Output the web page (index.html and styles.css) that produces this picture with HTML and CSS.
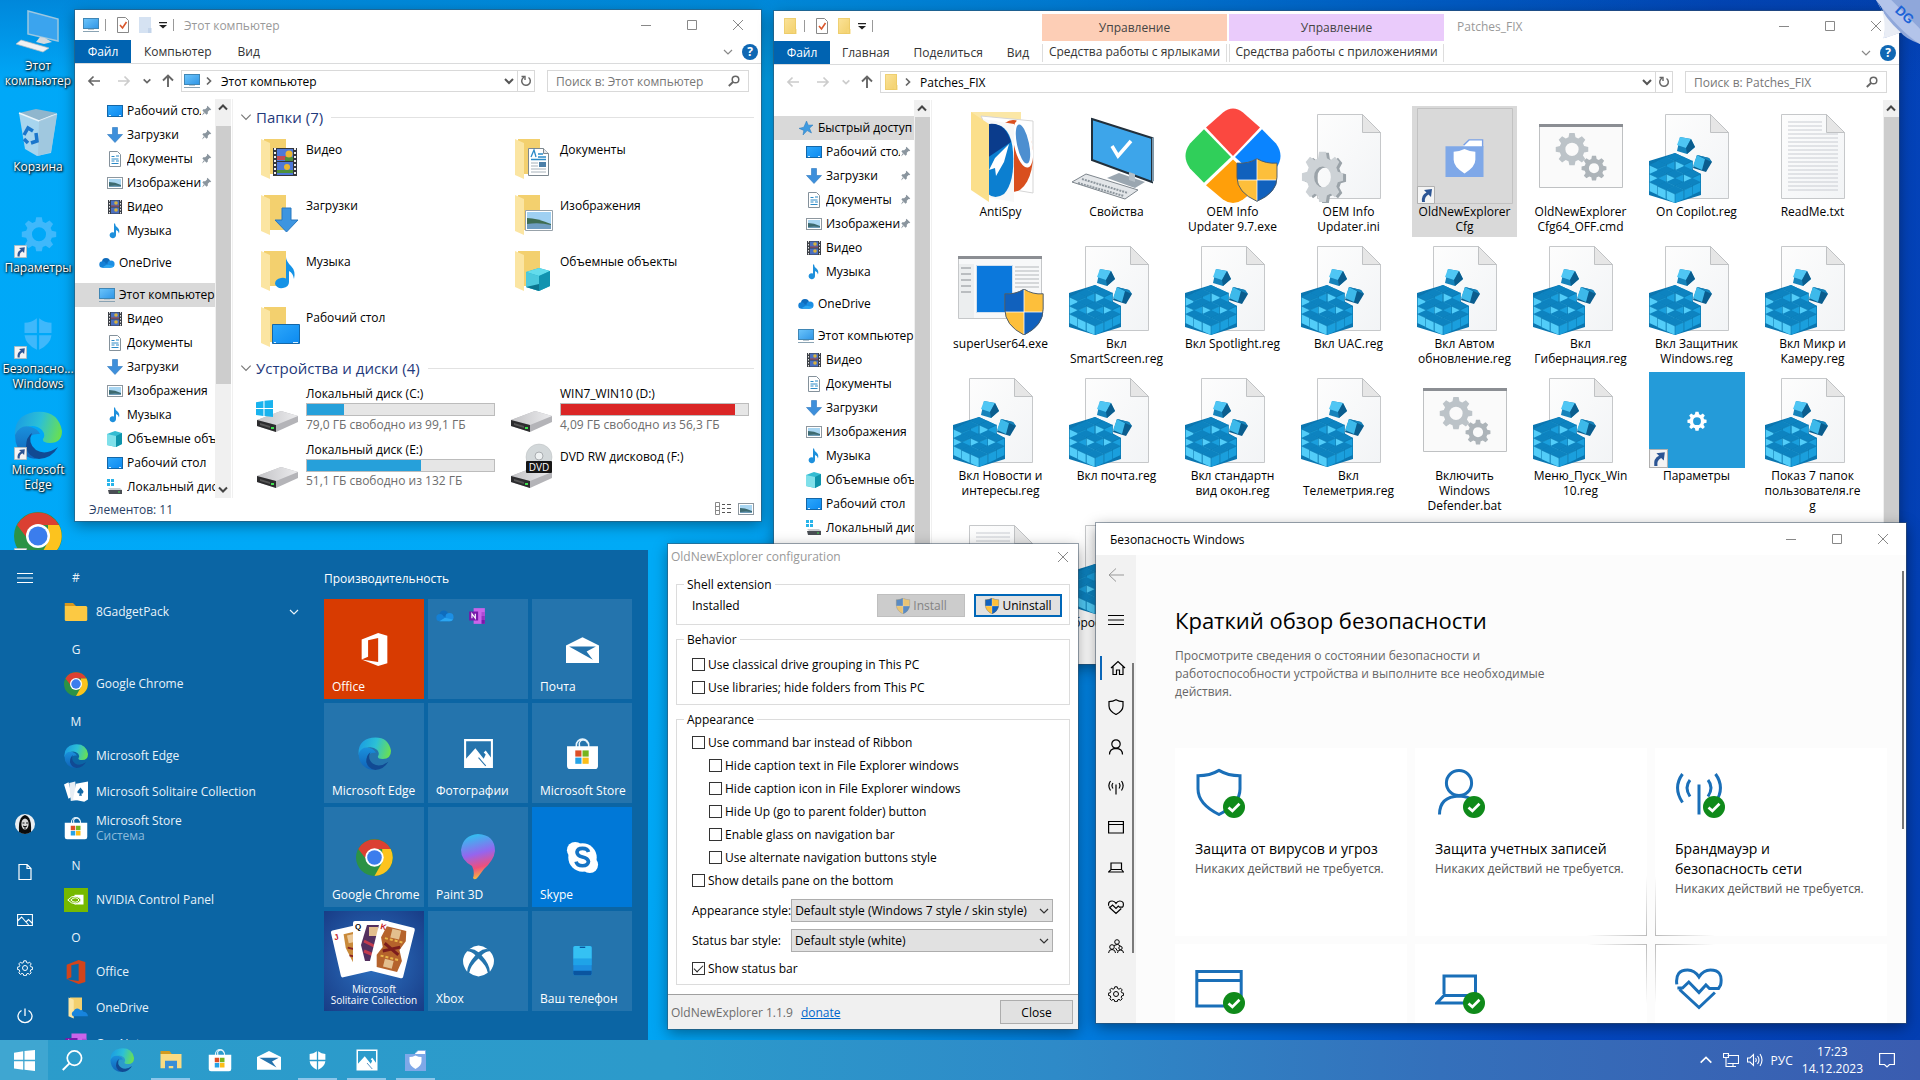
FILE: index.html
```html
<!DOCTYPE html>
<html lang="ru">
<head>
    <meta charset="UTF-8">
    <meta name="viewport" content="width=device-width, initial-scale=1.0">
    <title>Рабочий стол</title>
    <link rel="stylesheet" href="styles.css">
</head>
<body>
    <!-- Icon sprite -->
    <svg class="sprite" aria-hidden="true">
        <defs>
            <linearGradient id="gScreen" x1="0" y1="0" x2="1" y2="1"><stop offset="0" stop-color="#6cc5fb"/><stop offset="1" stop-color="#2f95e6"/></linearGradient>
            <linearGradient id="gDesk" x1="0" y1="0" x2="1" y2="1"><stop offset="0" stop-color="#2ea8fb"/><stop offset="1" stop-color="#0c8af0"/></linearGradient>
            <linearGradient id="gFolder" x1="0" y1="0" x2="1" y2="1"><stop offset="0" stop-color="#fbe39a"/><stop offset="1" stop-color="#f2cf69"/></linearGradient>
            <linearGradient id="gEdgeTop" x1="0" y1="0.4" x2="1" y2="0.6"><stop offset="0" stop-color="#1b9de2"/><stop offset="0.5" stop-color="#2cc0d6"/><stop offset="1" stop-color="#6be04f"/></linearGradient>
            <linearGradient id="gEdgeLow" x1="0" y1="0" x2="0" y2="1"><stop offset="0" stop-color="#1a90dc"/><stop offset="1" stop-color="#1063b8"/></linearGradient>
            <linearGradient id="gPage" x1="0" y1="0" x2="1" y2="1"><stop offset="0" stop-color="#fdfdfd"/><stop offset="1" stop-color="#f2f4f6"/></linearGradient>
            <linearGradient id="gPaint" x1="0.3" y1="0" x2="0.5" y2="1"><stop offset="0" stop-color="#2cc4f0"/><stop offset="0.45" stop-color="#9565ee"/><stop offset="0.75" stop-color="#ef4f7c"/><stop offset="1" stop-color="#f8c23a"/></linearGradient>
            <linearGradient id="gDrive" x1="0" y1="0" x2="1" y2="0"><stop offset="0" stop-color="#c3c3c6"/><stop offset="1" stop-color="#ececee"/></linearGradient>
        </defs>

        <!-- 16px icons -->
        <symbol id="i-pc" viewBox="0 0 16 16"><rect x="0.5" y="1.5" width="15" height="10" fill="url(#gScreen)" stroke="#3f86b5"/><path d="M0 14.5h16" stroke="#8aa3b3"/><path d="M5 12.5h6" stroke="#b9c7d0"/></symbol>
        <symbol id="i-desk" viewBox="0 0 16 16"><rect x="0.5" y="2.5" width="15" height="11" fill="url(#gDesk)" stroke="#1467a8"/><path d="M2 12.5h2M12 12.5h2" stroke="#d8efff"/></symbol>
        <symbol id="i-down" viewBox="0 0 16 16"><path d="M5.5 .5h5v7h5L8 15.5 .5 7.5h5z" fill="#3d8fdb" stroke="#2c77bd" stroke-width="0.6"/></symbol>
        <symbol id="i-doc" viewBox="0 0 16 16"><path d="M2.5 .5h8l3 3v12h-11z" fill="#fff" stroke="#84919b"/><path d="M4.5 5.5h3M4.5 8h7M4.5 10h3M9 10h3M4.5 12.5h7M9 5h3" stroke="#2c8ac7"/></symbol>
        <symbol id="i-pic" viewBox="0 0 16 16"><rect x="0.5" y="2.5" width="15" height="11" fill="#fff" stroke="#8d979f"/><path d="M2 4h12v8H2z" fill="#a9d6f2"/><path d="M2 7q6 0 12 3v2H2z" fill="#3d6a70"/><path d="M2 11q6-1 12 0v1H2z" fill="#6c9bb8"/></symbol>
        <symbol id="i-video" viewBox="0 0 16 16"><path d="M1 1h14v14H1z" fill="#3b3f46"/><path d="M4 1.5h8v6H4z" fill="#4a6fc0"/><path d="M4 8.5h8v6H4z" fill="#4a6fc0"/><circle cx="9" cy="4" r="1.8" fill="#d9b23c"/><circle cx="9" cy="11" r="1.8" fill="#d9b23c"/><path d="M4 6.5h8v1H4z" fill="#a9443c"/><path d="M2.5 1v14M13.5 1v14" stroke="#e6e6e6" stroke-dasharray="1.5 1.5"/></symbol>
        <symbol id="i-music" viewBox="0 0 16 16"><path d="M8 .5q0 2 2.5 4t1.5 6q-.5-3-3-3.500V12a3.200 3 0 1 1-2-2.600V.5z" fill="#1e90dc"/></symbol>
        <symbol id="i-cloud" viewBox="0 0 16 16"><circle cx="7" cy="7" r="4" fill="#0f6cbd"/><circle cx="3.500" cy="9.500" r="3.200" fill="#1480d6"/><circle cx="12" cy="9" r="3.600" fill="#1c8fe4"/><path d="M3.500 12.700 7 8l5 4.700z" fill="#1480d6"/><path d="M3 12.600 8 9.500l7 1.500q-1 1.700-3 1.700z" fill="#2ba6f2"/></symbol>
        <symbol id="i-cube" viewBox="0 0 16 16"><path d="M0 3 8 0l7 2v11l-6 3-9-2z" fill="#33bcd2"/><path d="M0 3l9 2v11l-9-2z" fill="#7fe0ea"/><path d="M9 5l6-3v11l-6 3z" fill="#0e94ab"/></symbol>
        <symbol id="i-disk" viewBox="0 0 16 16"><path d="M1 9h12l2 2H3z" fill="#c9ccd0"/><path d="M1 11h14v4H2z" fill="#4a4e54"/><path d="M11 13h2" stroke="#3fe04f"/><path d="M0 0h3v3H0zM4 0h3v3H4zM0 4h3v3H0zM4 4h3v3H4z" fill="#28b4ea"/></symbol>
        <symbol id="i-star" viewBox="0 0 16 16"><path d="M8.5 1l1.800 4.200 4.700-.2-3.500 3.200 2 4.800-4.300-2.400L5 15l.8-4.600L1 8.400l4.800-1.200z" fill="#3f9ae0" stroke="#2479bd" stroke-width="0.5"/></symbol>
        <symbol id="i-pin" viewBox="0 0 12 12"><path d="M7 .8 11.200 5l-1.200.6-.6-.2-2 2 .1 2L6 10.500 1.500 6l1-1.400 2.100.1 2-2-.2-.7zM3 8l1 1-3 2.500z" fill="#8a959e"/></symbol>
        <symbol id="i-fold" viewBox="0 0 16 16"><path d="M2 0h12v16H2z" fill="url(#gFolder)"/><path d="M11 11h3.500v5H11z" fill="#f5d679"/><path d="M2.500 .5h11v15h-11z" fill="none" stroke="#e8c660" stroke-width="0.6"/></symbol>
        <symbol id="i-foldoff" viewBox="0 0 16 16"><path d="M2 0h12v16H2z" fill="#d5e2f2"/><path d="M11 11h3.500v5H11z" fill="#c3d4ea"/></symbol>
        <symbol id="i-check" viewBox="0 0 16 16"><path d="M2.500 .5h8l3 3v12h-11z" fill="#fff" stroke="#888"/><path d="M5 8l2.500 3L11.500 5" fill="none" stroke="#d9572c" stroke-width="1.6"/></symbol>
        <symbol id="i-qat" viewBox="0 0 8 8"><path d="M0 1h8v1.300H0zM0 4h8L4 7.500z" fill="#222"/></symbol>
        <symbol id="i-left" viewBox="0 0 16 16"><path d="M14 8H3M7.500 3.500 3 8l4.500 4.500" fill="none" stroke="currentColor" stroke-width="1.7"/></symbol>
        <symbol id="i-right" viewBox="0 0 16 16"><path d="M2 8h11M8.500 3.500 13 8l-4.500 4.500" fill="none" stroke="currentColor" stroke-width="1.7"/></symbol>
        <symbol id="i-up" viewBox="0 0 16 16"><path d="M8 14V3M3 7.500 8 2.500l5 5" fill="none" stroke="currentColor" stroke-width="1.9"/></symbol>
        <symbol id="i-chev" viewBox="0 0 12 12"><path d="M2 4l4 4 4-4" fill="none" stroke="currentColor" stroke-width="var(--w, 1.2)"/></symbol>
        <symbol id="i-chevr" viewBox="0 0 12 12"><path d="M4 2.500 7.500 6 4 9.500" fill="none" stroke="#666" stroke-width="1.7"/></symbol>
        <symbol id="i-reload" viewBox="0 0 12 12"><path d="M4 2.200A4.300 4.300 0 1 0 8.500 2.500" fill="none" stroke="#666" stroke-width="1.5"/><path d="M1.500 1.500H5V5" fill="none" stroke="#666" stroke-width="1.4"/></symbol>
        <symbol id="i-find" viewBox="0 0 12 12"><circle cx="7.500" cy="4.500" r="3.300" fill="none" stroke="#666" stroke-width="1.5"/><path d="M5 7 .8 11" stroke="#666" stroke-width="1.9"/></symbol>
        <symbol id="i-min" viewBox="0 0 10 10"><path d="M0 5.500h10" stroke="currentColor"/></symbol>
        <symbol id="i-max" viewBox="0 0 10 10"><path d="M.5 .5h9v9h-9z" fill="none" stroke="currentColor"/></symbol>
        <symbol id="i-close" viewBox="0 0 10 10"><path d="M0 0l10 10M10 0 0 10" stroke="currentColor"/></symbol>

        <!-- explorer tiles -->
        <symbol id="t-folder" viewBox="0 0 44 48"><path d="M8 3h22v35H8z" fill="#f3d06e"/><path d="M5 3l9 4v36l-9-4z" fill="#fbe5a2"/></symbol>
        <symbol id="t-video" viewBox="0 0 44 48"><use href="#t-folder"/><path d="M17 12h24v28H17z" fill="#33363c"/><path d="M21 13h16v12H21zM21 26h16v13H21z" fill="#4e78d8"/><path d="M21 20h9v4h-9z" fill="#c24c54"/><path d="M29 21h8v4h-8zM21 34h16v3H21z" fill="#4f8f3c"/><circle cx="33" cy="18" r="3.5" fill="#ecb731"/><circle cx="31" cy="31" r="3" fill="#ecb731"/><path d="M19 12v28M39 12v28" stroke="#f0f0f0" stroke-width="2" stroke-dasharray="2 2"/></symbol>
        <symbol id="t-down" viewBox="0 0 44 48"><use href="#t-folder"/><path d="M26 16h9v12h7L30.500 40 19 28h7z" fill="#3d95e0" stroke="#2878c0"/></symbol>
        <symbol id="t-music" viewBox="0 0 44 48"><use href="#t-folder"/><path d="M30 9q0 4 5 9t3 13q-1-6-5-8v11q0 5-6 6t-8-4q0-5 6-6 3-.5 5 .5z" fill="#1492e6"/></symbol>
        <symbol id="t-desk" viewBox="0 0 44 48"><use href="#t-folder"/><path d="M16.500 20.500h27v19h-27z" fill="url(#gDesk)" stroke="#1467a8"/><path d="M18 38.500h2M37 38.500h5" stroke="#d8efff"/></symbol>
        <symbol id="t-doc" viewBox="0 0 44 48"><use href="#t-folder"/><path d="M18.500 12.500h15l5 5v22h-20z" fill="#fff" stroke="#7d8890"/><path d="M33.500 12.500v5h5" fill="#e4e8ec" stroke="#7d8890"/><path d="M21 21 24 14l2 7M28 18h5M28 21h8M21 23.500h15" fill="none" stroke="#2c8ac7" stroke-width="1.3"/><path d="M21 27h7M21 30h7M21 33h15M21 36h15" stroke="#a7b2ba"/><path d="M29 26h7v5h-7z" fill="#4b7fa8"/></symbol>
        <symbol id="t-pic" viewBox="0 0 44 48"><use href="#t-folder"/><path d="M15.500 18.500h27v20h-27z" fill="#fff" stroke="#98a2aa"/><path d="M17 20h24v17H17z" fill="#9fd0f2"/><path d="M17 26q10 0 24 6v2H17z" fill="#3f6d52"/><path d="M17 32q12-2 24 1v4H17z" fill="#6f9dc0"/></symbol>
        <symbol id="t-cube" viewBox="0 0 44 48"><use href="#t-folder"/><path d="M16 24l13-4 11 3v15l-11 5-13-4z" fill="#21b0cc"/><path d="M16 24l13-4 11 3-11 5z" fill="#63dcec"/><path d="M16 24l13 4v15l-13-4z" fill="#4bc9de"/><path d="M29 28l11-5v15l-11 5z" fill="#1193b0"/><path d="M29 36l-13 3 13 4z" fill="#0a7590"/></symbol>
        <symbol id="t-drive" viewBox="0 0 44 50"><path d="M1 38 25 29l17 5v6L20 50 1 44z" fill="#b4b4b8"/><path d="M1 38 25 29l17 5-22 9z" fill="url(#gDrive)"/><path d="M1 38l19 5v7L1 44z" fill="#2c2c2e"/><path d="M4 41l10 3v2L4 43z" fill="#555"/><path d="M15 45h3v2h-3z" fill="#3fe04f"/></symbol>
        <symbol id="t-winflag" viewBox="0 0 16 16"><path d="M0 2l7-1v6.500H0zM8 .8 16 0v7.500H8zM0 8.500h7V15l-7-1zM8 8.500h8V16l-8-1z" fill="currentColor"/></symbol>
        <symbol id="t-sysdrive" viewBox="0 0 44 50"><use href="#t-drive"/><use href="#t-winflag" x="0" y="18" width="17" height="17" color="#19b3ee"/></symbol>
        <symbol id="t-dvd" viewBox="0 0 44 50"><use href="#t-drive"/><circle cx="29" cy="19" r="13" fill="#d3d8da" stroke="#b8bcbe" stroke-width="0.5"/><circle cx="29" cy="18" r="4" fill="#eef1f2" stroke="#a9adb0"/><rect x="16" y="23" width="26" height="12" rx="1" fill="#161616"/><text x="29" y="33" class="dvd-label">DVD</text></symbol>

        <!-- 96px file icons -->
        <symbol id="f-page" viewBox="0 0 96 96"><path d="M16.500 6.500h45l18 18v66h-63z" fill="url(#gPage)" stroke="#c6c8ca"/><path d="M61.500 6.500v18h18z" fill="#e6e6e6" stroke="#c0c2c4"/></symbol>
        <symbol id="f-cell" viewBox="0 0 18 18"><path d="M9 0l8.700 4L9 8 .3 4z" fill="#0d83c0"/><path d="M.3 4 9 8v9L.3 13z" fill="#52cdf9"/><path d="M17.700 4 9 8v9l8.700-4z" fill="#1a9fdd"/><path d="M.3 13V4L9 8l8.700-4v9M9 8v9" fill="none" stroke="#0c74ab" stroke-width="0.6"/></symbol>
        <symbol id="f-reg" viewBox="0 0 96 96">
            <use href="#f-page"/>
            <path d="M31 29l11 2 4 8-8 7-10-3z" fill="#1583bb"/><path d="M31 29l11 2-5 9-9-3z" fill="#4fc6f4"/><path d="M37 40l5-9 4 8-8 7z" fill="#0a5d8e"/>
            <path d="M48 47l12 3 3 4-6 10-13-4z" fill="#0a5d8e"/><path d="M48 47l8 4-3 11-9-4z" fill="#3db9ea"/><path d="M48 47l12 3 3 4-7-3z" fill="#1583bb"/>
            <path d="M26 45l17 8v8l9 5v21l-26 8-26-8V53z" fill="#0b76b0"/>
            <use href="#f-cell" x="17" y="45" width="18" height="18"/><use href="#f-cell" x="26" y="49" width="18" height="18"/>
            <use href="#f-cell" x="8" y="49" width="18" height="18"/><use href="#f-cell" x="0" y="53" width="18" height="18"/>
            <use href="#f-cell" x="26" y="58" width="18" height="18"/><use href="#f-cell" x="34" y="62" width="18" height="18"/>
            <use href="#f-cell" x="8" y="58" width="18" height="18"/><use href="#f-cell" x="0" y="62" width="18" height="18"/>
            <use href="#f-cell" x="17" y="62" width="18" height="18"/><use href="#f-cell" x="34" y="70" width="18" height="18"/>
            <use href="#f-cell" x="0" y="70" width="18" height="18"/><use href="#f-cell" x="17" y="70" width="18" height="18"/>
            <use href="#f-cell" x="26" y="74" width="18" height="18"/><use href="#f-cell" x="8" y="74" width="18" height="18"/>
            <use href="#f-cell" x="17" y="78" width="18" height="18"/>
        </symbol>
        <symbol id="f-txt" viewBox="0 0 96 96"><use href="#f-page"/><path d="M23 14h34M23 18h34M23 22h34M23 26h50M23 30h50M23 34h50M23 38h50M23 42h50M23 46h50M23 50h50M23 54h50M23 58h50M23 62h50M23 66h50M23 70h50M23 74h50M23 78h50M23 82h50" stroke="#c9ccd2"/></symbol>
        <symbol id="f-gear" viewBox="0 0 32 32" preserveAspectRatio="none"><path d="M13.500 1h5l.8 4 2.600 1.200L25.300 4 28.500 7.200l-2.200 3.400 1.100 2.600 3.900.8v4.600l-3.900.8-1.100 2.600 2.200 3.400-3.200 3.200-3.400-2.200-2.600 1.100-.8 3.900h-5l-.8-3.900-2.600-1.100-3.400 2.200-3.200-3.200L5.700 22l-1.100-2.600-3.900-.8V14l3.900-.8 1.100-2.600-2.200-3.400L6.700 4l3.400 2.200L12.700 5zM16 10a6 6 0 1 0 0 12.500A6 6 0 0 0 16 10z" fill="currentColor" fill-rule="evenodd"/></symbol>
        <symbol id="f-cmd" viewBox="0 0 96 96"><path d="M6.500 17.500h83v62h-83z" fill="#fafafa" stroke="#bfc1c3"/><path d="M6 16h84v3H6z" fill="#8b8e93"/><use href="#f-gear" x="22" y="24" width="34" height="34" color="#bcc3c8"/><use href="#f-gear" x="48" y="47" width="26" height="26" color="#adb4b9"/></symbol>
        <symbol id="f-ini" viewBox="0 0 96 96"><use href="#f-page"/><use href="#f-gear" x="3" y="43" width="43" height="53" color="#9ba3a9"/><use href="#f-gear" x="0" y="42" width="43" height="53" color="#cdd2d6"/></symbol>
        <symbol id="f-shield" viewBox="0 0 42 48"><path d="M21 0q9 6 20 5v16q0 17-20 27Q1 38 1 21V5q11 1 20-5z" fill="#fdbf3b"/><path d="M21 0v24H1V5q11 1 20-5zM21 24h20q-1 15-20 24z" fill="#1161bd"/><path d="M21 0v48M1 24h40" stroke="#fff" stroke-width="0.8"/><path d="M21 0q9 6 20 5v16q0 17-20 27Q1 38 1 21V5q11 1 20-5z" fill="none" stroke="#4a5a6a"/></symbol>
        <symbol id="f-oem" viewBox="0 0 96 108" preserveAspectRatio="none"><path d="M21 22 38 5q10-9 20 0l17 17-27 32z" fill="#fb4840"/><path d="M77 24l14 16q9 14 0 28L78 84 50 55z" fill="#0a84ff"/><path d="M19 24 5 40q-9 14 0 28l14 16 27-29z" fill="#30cf5a"/><path d="M48 58 76 87 58 103q-10 8-20 0L21 87z" fill="#ff9f0a"/><use href="#f-shield" x="51" y="56" width="42" height="50"/></symbol>
        <symbol id="f-antispy" viewBox="0 0 96 96"><path d="M18 4h50v70H18z" fill="#fbe7a6"/><path d="M28 8l52 5v72l-18-3z" fill="#fff" stroke="#d5d5d5"/><ellipse cx="60" cy="48" rx="20" ry="36" fill="#d94f1e"/><ellipse cx="70" cy="36" rx="9" ry="24" fill="#fff" transform="rotate(-12 70 36)"/><ellipse cx="70" cy="36" rx="6" ry="20" fill="#4d8fd0" transform="rotate(-12 70 36)"/><path d="M30 11l31 5v78l-28-5z" fill="#f8f8f8"/><path d="M36 16q22-2 24 28t-9 42q-9 6-16 0z" fill="#0c7fd0"/><path d="M36 16q16-2 22 18L34 50z" fill="#0b3c8c"/><path d="M56 36 42 50l-6 12 6-2 1 8 8-14z" fill="#fff"/><path d="M18 4l18 12v78L18 82z" fill="#fbdf8b"/></symbol>
        <symbol id="f-props" viewBox="0 0 96 96"><path d="M23 11l60 19v44L23 52z" fill="#3da5ea" stroke="#22303c" stroke-width="2"/><path d="M83 30l2-1v44l-2 1z" fill="#7f98aa"/><path d="M38 70l12-5 26 9-10 6z" fill="#9aa6b0"/><path d="M60 64l6 2v8l-6-2z" fill="#b4bec6"/><path d="M3 74l14-8 52 16-13 9z" fill="#e3e6e9" stroke="#7e868d"/><path d="M9 75l46 13M13 71l46 14" stroke="#8e979e" stroke-width="2" stroke-dasharray="2 1"/><path d="M43 38l6 10 13-15" fill="none" stroke="#fff" stroke-width="3.5"/></symbol>
        <symbol id="f-super" viewBox="0 0 96 96"><path d="M5.500 16.500h83v62h-83z" fill="#f7f8f9" stroke="#c5c7c9"/><path d="M5 16h84v3H5z" fill="#8b8e93"/><path d="M6 24h15v54H6z" fill="#eceeef"/><path d="M8 28h10M8 34h10M8 40h10M8 46h10M8 52h10" stroke="#a9adb1" stroke-width="1.5"/><path d="M23.500 25.500h36v47h-36z" fill="#0b78dc" stroke="#cfe0f0"/><path d="M62 27h24M62 31h24M62 35h24M62 39h24M62 43h24M62 47h24" stroke="#b3b7ba"/><use href="#f-shield" x="50" y="49" width="42" height="46"/></symbol>
        <symbol id="f-link" viewBox="0 0 18 18"><path d="M.5 .5h17v17H.5z" fill="#f4f4f4" stroke="#b0b0b0"/><path d="M5 16q-1-7 4.500-9.500L7 4l8-1-1 8-2.500-2.500Q7 11 8 16z" fill="#2c5594"/></symbol>
        <symbol id="f-shieldfolder" viewBox="0 0 42 42"><path d="M20 7l6-6h15v8H20z" fill="#fff"/><path d="M20 7l6-6h15v8" fill="none" stroke="#7aa1e6" stroke-width="1.5"/><path d="M0 8h42v34H0z" fill="#7fa8e8"/><path d="M21 11q6 3 12 3v9q0 8-12 15Q9 31 9 23v-9q6 0 12-3z" fill="#fff"/></symbol>
        <symbol id="f-cfg" viewBox="0 0 96 96"><path d="M.5 .5h95v95H.5z" fill="none" stroke="#c2c2c2"/><use href="#f-shieldfolder" x="27" y="31" width="41" height="38"/><use href="#f-link" x="0" y="78" width="18" height="18"/></symbol>
        <symbol id="f-param" viewBox="0 0 96 96"><path d="M0 0h96v96H0z" fill="#249bd9"/><use href="#f-gear" x="38" y="39" width="20" height="20" color="#fff"/><use href="#f-link" x="0" y="77" width="19" height="19"/></symbol>

        <!-- apps -->
        <symbol id="a-edge" viewBox="0 0 48 48"><path d="M1 26Q-1 5 20 1q24-3 28 19 0 12-12 12-8 0-7-4 3-4-1-9-8-7-17-2Q3 20 1 26z" fill="url(#gEdgeTop)"/><path d="M1 24q5-11 16-8 7 2 9 7-11-1-13 8-1 12 12 16-7 2-13-2Q1 39 1 24z" fill="url(#gEdgeLow)"/><path d="M18 22q-5 10 4 17 10 6 22-3-6 11-19 12-11-2-13-12 0-10 6-14z" fill="#114a93"/></symbol>
        <symbol id="a-chrome" viewBox="0 0 48 48"><circle cx="24" cy="24" r="24" fill="#2b9246"/><path d="M3 13A24 24 0 0 1 45 13H24L13 26z" fill="#db4032"/><path d="M45 13a24 24 0 0 1-21 35l10-18V13z" fill="#fcc31e"/><circle cx="24" cy="24" r="12" fill="#fff"/><circle cx="24" cy="24" r="9.5" fill="#3b7ded"/></symbol>
        <symbol id="a-store" viewBox="0 0 32 32"><path d="M10 12V8a6 6 0 0 1 12 0v4M13 12V8a4 4 0 0 1 8-2" fill="none" stroke="#e8f4fb" stroke-width="1.5"/><path d="M1 9h30v19q0 3-3 3H4q-3 0-3-3z" fill="#fff"/><path d="M9 13h6v6H9z" fill="#dd4f26"/><path d="M16 13h6v6h-6z" fill="#78b41e"/><path d="M9 20h6v6H9z" fill="#26a3e6"/><path d="M16 20h6v6h-6z" fill="#fbbd18"/></symbol>
        <symbol id="a-mail" viewBox="0 0 32 32"><path d="M0 12 16 4l16 8v17H0z" fill="#fff"/><path d="M3 13h26l-9 5 6 8L3 13z" fill="#2473ad"/></symbol>
        <symbol id="a-photo" viewBox="0 0 32 32"><path d="M3 3h26v26H3z" fill="none" stroke="#fff" stroke-width="2"/><path d="M3 22l10-11 8 10 2-4-2-2 2-2 6 8v8H3z" fill="#fff"/><path d="M16 20l7 8" stroke="#2473ad"/></symbol>
        <symbol id="a-office" viewBox="0 0 32 36"><path d="M2 7 20 0l10 3v30l-10 3L2 29l18 2.500V5.500L9 8v18l-7 3z" fill="currentColor"/></symbol>
        <symbol id="a-phone" viewBox="0 0 32 36"><rect x="6" y="1" width="20" height="32" rx="1.5" fill="#1c8ee0"/><path d="M6 3q0-2 2-2h16q2 0 2 2v12H6z" fill="#35c1f3"/><path d="M6 15h20v7H6z" fill="#1fa3e8"/><path d="M6 28h20v3q0 2-2 2H8q-2 0-2-2z" fill="#0a55a0"/><path d="M13 2.500h6" stroke="#0a55a0" stroke-width="1.5"/></symbol>
        <symbol id="a-skype" viewBox="0 0 36 36"><circle cx="10" cy="10" r="9" fill="#fff"/><circle cx="26" cy="26" r="9" fill="#fff"/><circle cx="18" cy="18" r="15.5" fill="#fff"/><path d="M24.500 12q-1-4-6.500-4t-6 4q0 4 6 5.500t6.500 5q-.5 4.500-6.500 4.500t-7-4.500" fill="none" stroke="#1473c4" stroke-width="4"/></symbol>
        <symbol id="a-paint" viewBox="0 0 36 46"><path d="M18 0q17 1 17 17-1 9-11 18l-6 8q-3 4-5 1 2-6-1-12Q1 26 1 16 3 1 18 0z" fill="url(#gPaint)"/></symbol>
        <symbol id="a-xbox" viewBox="0 0 32 32"><path d="M7 4q9-7 18 0-4-1-9 3-5-4-9-3zM5 6q4 0 8 4-8 9-8 16-8-11 0-20zM27 6q-4 0-8 4 8 9 8 16 8-11 0-20zM16 13q8 7 9 14-9 7-18 0 1-7 9-14z" fill="#fff"/></symbol>
        <symbol id="a-note" viewBox="0 0 32 32"><path d="M10 2h20v28H10z" fill="#ca64ea"/><path d="M24 9h6v7h-6z" fill="#ae4bd5"/><path d="M24 16h6v7h-6z" fill="#9332bf"/><path d="M24 23h6v7h-6z" fill="#7719aa"/><path d="M2 8h16v16H2z" fill="#7719aa"/><path d="M7 20v-8l6 8v-8" fill="none" stroke="#fff" stroke-width="2"/></symbol>
        <symbol id="a-folder" viewBox="0 0 32 32"><path d="M1 4h11l4 4H1z" fill="#d7981d"/><path d="M1 8h28q2 0 2 2v16q0 2-2 2H3q-2 0-2-2z" fill="#fcc943"/></symbol>
        <symbol id="a-explorer" viewBox="0 0 32 32"><path d="M2 4h12l3 4H2z" fill="#d39a1f"/><path d="M2 8h28v19H2z" fill="#fbdb82"/><path d="M8 17h16v12h-5v-5h-6v5H8z" fill="#3b8ed6"/></symbol>
        <symbol id="a-odfolder" viewBox="0 0 32 32"><path d="M8 2h16v20H8z" fill="#f3d06e"/><path d="M6 2l7 3v25l-7-3z" fill="#fbe5a2"/><path d="M12 27a4 4 0 0 1 1-7 5 5 0 0 1 9-1q3-1 4 2 5 0 6 6z" fill="#1784dd"/></symbol>
        <symbol id="a-cards" viewBox="0 0 32 32"><path d="M0 6l6-3 5 19-5 3z" fill="#fff"/><path d="M7 4l8-2 2 25-8 1z" fill="#e8eef4"/><path d="M16 5l16-3v24l-5 3-15-3z" fill="#fff"/><path d="M22 10l4 5q0 4-3 3l1 3h-4l1-3q-4 0-3-3z" fill="#1167a5"/></symbol>
        <symbol id="a-nvidia" viewBox="0 0 32 32"><path d="M0 0h32v32H0z" fill="#76b900"/><path d="M14 9h12v13H14z" fill="#fff"/><path d="M5 16q5-6 11-5 5 1 7 5-3 5-8 5T5 16zM9 16q3-3 6-3t5 3q-2 3-5 3t-6-3z" fill="#76b900" stroke="#fff" stroke-width="1.3"/></symbol>
        <symbol id="a-wshield" viewBox="0 0 32 32"><path d="M15 2v13H4V6q6 0 11-4zM17 2q5 4 11 4v9H17zM4 17h11v13Q5 25 4 17zM17 17h11q-1 8-11 13z" fill="currentColor"/></symbol>
        <symbol id="a-pc" viewBox="0 0 48 48"><path d="M14 4l30 8v22L14 27z" fill="#3ba4ee" stroke="#9cc7e0" stroke-width="1.5"/><path d="M26 30l5 1 7 4-8 2-8-2z" fill="#d3dade"/><path d="M2 37l5-4 28 8-6 4z" fill="#eff1f2" stroke="#b4bcc2" stroke-width="0.7"/></symbol>
        <symbol id="a-bin" viewBox="0 0 48 48"><path d="M5 5l38 2-6 38-14 3-12-7z" fill="#b9d9ec" opacity="0.9"/><path d="M5 5 22 1l21 4-18 8z" fill="#8fb6cd"/><path d="M5 5l20 8 18-7" fill="none" stroke="#eaf5fb" stroke-width="1.5"/><path d="M25 13l18-7-6 38-13 4z" fill="#9fc4db" opacity="0.8"/><path d="M10 27l4-7 5 3M22 25l1 8-6 2M14 35l-4-4" fill="none" stroke="#1a76cc" stroke-width="3.5"/></symbol>

        <!-- outline icons -->
        <symbol id="o-menu" viewBox="0 0 16 16"><path d="M0 3.500h16M0 8h16M0 12.500h16" stroke="currentColor" stroke-width="1.2"/></symbol>
        <symbol id="o-back" viewBox="0 0 16 16"><path d="M16 8H1M8 1.500 1 8l7 6.500" fill="none" stroke="currentColor"/></symbol>
        <symbol id="o-page" viewBox="0 0 16 16"><path d="M2 .5h8l4 4v11H2zM10 .5v4h4" fill="none" stroke="currentColor" stroke-width="1.2"/></symbol>
        <symbol id="o-image" viewBox="0 0 16 16"><path d="M.6 2.500h14.800v11H.6zM.6 9l4-4 7 8M9 10l2.500-2.500 4 4" fill="none" stroke="currentColor" stroke-width="1.1"/></symbol>
        <symbol id="o-gear" viewBox="0 0 16 16"><circle cx="8" cy="8" r="2.5" fill="none" stroke="currentColor"/><path d="M6.800 .8h2.400l.4 1.800 1.400.6 1.600-1 1.600 1.700-1 1.500.6 1.400 1.800.4v2.200l-1.800.4-.6 1.400 1 1.600-1.600 1.600-1.600-1-1.400.6-.4 1.700H6.800l-.4-1.700-1.400-.6-1.600 1-1.600-1.600 1-1.600-.6-1.400-1.800-.4V7.200L2.200 6.800l.6-1.400-1-1.500 1.600-1.700 1.600 1 1.400-.6z" fill="none" stroke="currentColor"/></symbol>
        <symbol id="o-power" viewBox="0 0 16 16"><path d="M8 .5V8M4.500 2.500a7 6.500 0 1 0 7 0" fill="none" stroke="currentColor" stroke-width="1.3"/></symbol>
        <symbol id="o-home" viewBox="0 0 16 16"><path d="M1 8l7-6.500L15 8M3 6.500v8h3.500V10h3v4.500H13v-8" fill="none" stroke="currentColor" stroke-width="1.2"/></symbol>
        <symbol id="o-shield" viewBox="0 0 16 16"><path d="M8 .8q3 1.800 7 1.800V7q0 5-7 8.500Q1 12 1 7V2.600q4 0 7-1.800z" fill="none" stroke="currentColor" stroke-width="var(--w, 1.2)"/></symbol>
        <symbol id="o-user" viewBox="0 0 16 16"><circle cx="8" cy="5" r="4.2" fill="none" stroke="currentColor" stroke-width="var(--w, 1.2)"/><path d="M1.500 15.500q0-6 6.500-6.200 6.500.2 6.500 6.200" fill="none" stroke="currentColor" stroke-width="var(--w, 1.2)"/></symbol>
        <symbol id="o-radio" viewBox="0 0 16 16"><path d="M8 5.500v10M5 4Q3 6.500 5 9.500M11 4q2 2.500 0 5.500M2.500 2Q-.8 6.500 2.500 11.500M13.500 2q3.300 4.500 0 9.500" fill="none" stroke="currentColor" stroke-width="var(--w, 1.2)"/></symbol>
        <symbol id="o-window" viewBox="0 0 16 16"><path d="M.6 2.500h14.800v11.500H.6zM.6 5.500h14.800" fill="none" stroke="currentColor" stroke-width="var(--w, 1.2)"/></symbol>
        <symbol id="o-laptop" viewBox="0 0 16 16"><path d="M3 10V4h10.500v6M3 10.500h10.500L15.500 13H.6zM.6 13h15" fill="none" stroke="currentColor" stroke-width="var(--w, 1.2)"/></symbol>
        <symbol id="o-heart" viewBox="0 0 16 16"><path d="M.6 6.800Q0 2 4.200 2 6.500 2 8 4.300 9.500 2 11.800 2q4.400 0 3.400 5l-.7 1.200H11.500L10.300 7 8 9.500 4.600 6 2.500 8H.8M1.500 8.500 8 14.500l5.300-5" fill="none" stroke="currentColor" stroke-width="var(--w, 1.2)"/></symbol>
        <symbol id="o-family" viewBox="0 0 16 16"><circle cx="9" cy="3" r="2.3" fill="none" stroke="currentColor"/><circle cx="4" cy="8" r="2.3" fill="none" stroke="currentColor"/><circle cx="12.500" cy="9" r="1.7" fill="none" stroke="currentColor"/><path d="M.6 14q0-3.500 3.400-3.500T7.500 14M9.500 14q0-3 3-3t3 3M6 6.500q4-2.500 6.500 .5M7.500 9l2 3" fill="none" stroke="currentColor"/></symbol>
        <symbol id="o-ok" viewBox="0 0 20 20"><circle cx="10" cy="10" r="10" fill="#0f8a1a"/><path d="M5 10.500 8.500 13.500 15 7" fill="none" stroke="#fff" stroke-width="2.5"/></symbol>
        <symbol id="o-net" viewBox="0 0 16 16"><path d="M4.500 3.500h11v8H4.500M10 11.500V14M7 14.500h6M.5 1.500h5v4h-5zM3 5.500v9h4" fill="none" stroke="currentColor" stroke-width="1.1"/></symbol>
        <symbol id="o-sound" viewBox="0 0 16 16"><path d="M.5 6h2.500l3.500-3.500v11L3 10H.5zM8.500 6q1.500 2 0 4M10.500 4q3 4 0 8M13 2q4 6 0 12" fill="none" stroke="currentColor" stroke-width="1.1"/></symbol>
        <symbol id="o-note" viewBox="0 0 16 16"><path d="M.6 1.500h14.800v11H10.500L8 15l-2.500-2.500H.6z" fill="none" stroke="currentColor" stroke-width="1.2"/></symbol>
        <symbol id="o-search" viewBox="0 0 22 22"><circle cx="13" cy="8.500" r="7.5" fill="none" stroke="#fff" stroke-width="1.8"/><path d="M7.800 14 .8 21" stroke="#fff" stroke-width="2"/></symbol>
    </svg>

    <main class="desktop">
        <!-- Desktop shortcuts -->
        <ul class="shortcuts">
            <li><svg class="big"><use href="#a-pc"/></svg><span>Этот<br>компьютер</span></li>
            <li><svg class="big"><use href="#a-bin"/></svg><span>Корзина</span></li>
            <li><svg class="big faint"><use href="#f-gear" x="7" y="7" width="36" height="36"/></svg><svg class="link"><use href="#f-link"/></svg><span>Параметры</span></li>
            <li><svg class="big faint"><use href="#a-wshield" x="6" y="6" width="36" height="36"/></svg><svg class="link"><use href="#f-link"/></svg><span>Безопасно...<br>Windows</span></li>
            <li><svg class="big"><use href="#a-edge"/></svg><svg class="link"><use href="#f-link"/></svg><span>Microsoft<br>Edge</span></li>
            <li><svg class="big"><use href="#a-chrome"/></svg><svg class="link"><use href="#f-link"/></svg></li>
        </ul>

        <!-- This PC window -->
        <section class="window win-pc">
            <header class="titlebar">
                <div class="quick">
                    <svg><use href="#i-pc"/></svg><i></i><svg><use href="#i-check"/></svg><svg><use href="#i-foldoff"/></svg><svg class="tiny"><use href="#i-qat"/></svg><i></i>
                </div>
                <h1>Этот компьютер</h1>
                <div class="caption">
                    <button aria-label="Свернуть"><svg><use href="#i-min"/></svg></button>
                    <button aria-label="Развернуть"><svg><use href="#i-max"/></svg></button>
                    <button aria-label="Закрыть"><svg><use href="#i-close"/></svg></button>
                </div>
            </header>
            <nav class="ribbon">
                <div class="tabs">
                    <a href="#" class="file">Файл</a>
                    <a href="#">Компьютер</a>
                    <a href="#">Вид</a>
                </div>
                <svg class="expand"><use href="#i-chev"/></svg>
                <button class="help" aria-label="Справка">?</button>
            </nav>
            <div class="addressbar">
                <button class="arrow" aria-label="Назад"><svg><use href="#i-left"/></svg></button>
                <button class="arrow off" aria-label="Вперед"><svg><use href="#i-right"/></svg></button>
                <button class="arrow recent" aria-label="Последние"><svg><use href="#i-chev"/></svg></button>
                <button class="arrow parent" aria-label="Вверх"><svg><use href="#i-up"/></svg></button>
                <div class="path">
                    <svg><use href="#i-pc"/></svg><svg class="sep"><use href="#i-chevr"/></svg><span>Этот компьютер</span>
                    <svg class="drop"><use href="#i-chev"/></svg><button aria-label="Обновить"><svg><use href="#i-reload"/></svg></button>
                </div>
                <label class="search"><input type="text" placeholder="Поиск в: Этот компьютер"><svg><use href="#i-find"/></svg></label>
            </div>
            <div class="panes">
                <nav class="tree">
                    <a href="#" class="sub"><svg><use href="#i-desk"/></svg><span>Рабочий стол</span><svg class="pin"><use href="#i-pin"/></svg></a>
                    <a href="#" class="sub"><svg><use href="#i-down"/></svg><span>Загрузки</span><svg class="pin"><use href="#i-pin"/></svg></a>
                    <a href="#" class="sub"><svg><use href="#i-doc"/></svg><span>Документы</span><svg class="pin"><use href="#i-pin"/></svg></a>
                    <a href="#" class="sub"><svg><use href="#i-pic"/></svg><span>Изображения</span><svg class="pin"><use href="#i-pin"/></svg></a>
                    <a href="#" class="sub"><svg><use href="#i-video"/></svg><span>Видео</span></a>
                    <a href="#" class="sub"><svg><use href="#i-music"/></svg><span>Музыка</span></a>
                    <a href="#" class="root"><svg><use href="#i-cloud"/></svg><span>OneDrive</span></a>
                    <a href="#" class="root current"><svg><use href="#i-pc"/></svg><span>Этот компьютер</span></a>
                    <a href="#" class="sub"><svg><use href="#i-video"/></svg><span>Видео</span></a>
                    <a href="#" class="sub"><svg><use href="#i-doc"/></svg><span>Документы</span></a>
                    <a href="#" class="sub"><svg><use href="#i-down"/></svg><span>Загрузки</span></a>
                    <a href="#" class="sub"><svg><use href="#i-pic"/></svg><span>Изображения</span></a>
                    <a href="#" class="sub"><svg><use href="#i-music"/></svg><span>Музыка</span></a>
                    <a href="#" class="sub"><svg><use href="#i-cube"/></svg><span>Объемные объекты</span></a>
                    <a href="#" class="sub"><svg><use href="#i-desk"/></svg><span>Рабочий стол</span></a>
                    <a href="#" class="sub"><svg><use href="#i-disk"/></svg><span>Локальный диск</span></a>
                </nav>
                <div class="scroll">
                    <svg class="flip"><use href="#i-chev"/></svg>
                    <div class="thumb thumb-pc"></div>
                    <svg><use href="#i-chev"/></svg>
                </div>
                <div class="content">
                    <h2><svg><use href="#i-chev"/></svg>Папки (7)</h2>
                    <ul class="folders">
                        <li><svg><use href="#t-video"/></svg>Видео</li>
                        <li><svg><use href="#t-doc"/></svg>Документы</li>
                        <li><svg><use href="#t-down"/></svg>Загрузки</li>
                        <li><svg><use href="#t-pic"/></svg>Изображения</li>
                        <li><svg><use href="#t-music"/></svg>Музыка</li>
                        <li><svg><use href="#t-cube"/></svg>Объемные объекты</li>
                        <li><svg><use href="#t-desk"/></svg>Рабочий стол</li>
                    </ul>
                    <h2><svg><use href="#i-chev"/></svg>Устройства и диски (4)</h2>
                    <ul class="drives">
                        <li>
                            <svg><use href="#t-sysdrive"/></svg>
                            <div><p>Локальный диск (C:)</p><div class="bar"><div style="width: 20%"></div></div><small>79,0 ГБ свободно из 99,1 ГБ</small></div>
                        </li>
                        <li>
                            <svg><use href="#t-drive"/></svg>
                            <div><p>WIN7_WIN10 (D:)</p><div class="bar full"><div style="width: 93%"></div></div><small>4,09 ГБ свободно из 56,3 ГБ</small></div>
                        </li>
                        <li>
                            <svg><use href="#t-drive"/></svg>
                            <div><p>Локальный диск (E:)</p><div class="bar"><div style="width: 61%"></div></div><small>51,1 ГБ свободно из 132 ГБ</small></div>
                        </li>
                        <li class="disc">
                            <svg><use href="#t-dvd"/></svg>
                            <div><p>DVD RW дисковод (F:)</p></div>
                        </li>
                    </ul>
                </div>
            </div>
            <footer class="status">
                <span>Элементов: 11</span>
                <svg class="details" viewBox="0 0 16 14"><path d="M.5 .5h4v12h-4zM.5 4.500h4M.5 8.500h4" fill="none" stroke="#888"/><path d="M7 2.500h3M12 2.500h4M7 6.500h3M12 6.500h4M7 10.500h3M12 10.500h4" stroke="#555"/></svg>
                <svg><use href="#i-pic"/></svg>
            </footer>
        </section>

        <!-- Patches_FIX window -->
        <section class="window win-fix">
            <header class="titlebar">
                <div class="quick">
                    <svg><use href="#i-fold"/></svg><i></i><svg><use href="#i-check"/></svg><svg><use href="#i-fold"/></svg><svg class="tiny"><use href="#i-qat"/></svg><i></i>
                </div>
                <div class="context">
                    <span class="links">Управление</span>
                    <span class="apps">Управление</span>
                </div>
                <h1>Patches_FIX</h1>
                <div class="caption">
                    <button aria-label="Свернуть"><svg><use href="#i-min"/></svg></button>
                    <button aria-label="Развернуть"><svg><use href="#i-max"/></svg></button>
                    <button aria-label="Закрыть"><svg><use href="#i-close"/></svg></button>
                </div>
            </header>
            <nav class="ribbon">
                <div class="tabs">
                    <a href="#" class="file">Файл</a>
                    <a href="#">Главная</a>
                    <a href="#">Поделиться</a>
                    <a href="#">Вид</a>
                </div>
                <a href="#" class="tools links">Средства работы с ярлыками</a>
                <a href="#" class="tools apps">Средства работы с приложениями</a>
                <svg class="expand"><use href="#i-chev"/></svg>
                <button class="help" aria-label="Справка">?</button>
            </nav>
            <div class="addressbar">
                <button class="arrow off" aria-label="Назад"><svg><use href="#i-left"/></svg></button>
                <button class="arrow off" aria-label="Вперед"><svg><use href="#i-right"/></svg></button>
                <button class="arrow recent off" aria-label="Последние"><svg><use href="#i-chev"/></svg></button>
                <button class="arrow parent" aria-label="Вверх"><svg><use href="#i-up"/></svg></button>
                <div class="path">
                    <svg><use href="#i-fold"/></svg><svg class="sep"><use href="#i-chevr"/></svg><span>Patches_FIX</span>
                    <svg class="drop"><use href="#i-chev"/></svg><button aria-label="Обновить"><svg><use href="#i-reload"/></svg></button>
                </div>
                <label class="search"><input type="text" placeholder="Поиск в: Patches_FIX"><svg><use href="#i-find"/></svg></label>
            </div>
            <div class="panes">
                <nav class="tree">
                    <a href="#" class="root current quick-access"><svg><use href="#i-star"/></svg><span>Быстрый доступ</span></a>
                    <a href="#" class="sub"><svg><use href="#i-desk"/></svg><span>Рабочий стол</span><svg class="pin"><use href="#i-pin"/></svg></a>
                    <a href="#" class="sub"><svg><use href="#i-down"/></svg><span>Загрузки</span><svg class="pin"><use href="#i-pin"/></svg></a>
                    <a href="#" class="sub"><svg><use href="#i-doc"/></svg><span>Документы</span><svg class="pin"><use href="#i-pin"/></svg></a>
                    <a href="#" class="sub"><svg><use href="#i-pic"/></svg><span>Изображения</span><svg class="pin"><use href="#i-pin"/></svg></a>
                    <a href="#" class="sub"><svg><use href="#i-video"/></svg><span>Видео</span></a>
                    <a href="#" class="sub"><svg><use href="#i-music"/></svg><span>Музыка</span></a>
                    <a href="#" class="root"><svg><use href="#i-cloud"/></svg><span>OneDrive</span></a>
                    <a href="#" class="root"><svg><use href="#i-pc"/></svg><span>Этот компьютер</span></a>
                    <a href="#" class="sub"><svg><use href="#i-video"/></svg><span>Видео</span></a>
                    <a href="#" class="sub"><svg><use href="#i-doc"/></svg><span>Документы</span></a>
                    <a href="#" class="sub"><svg><use href="#i-down"/></svg><span>Загрузки</span></a>
                    <a href="#" class="sub"><svg><use href="#i-pic"/></svg><span>Изображения</span></a>
                    <a href="#" class="sub"><svg><use href="#i-music"/></svg><span>Музыка</span></a>
                    <a href="#" class="sub"><svg><use href="#i-cube"/></svg><span>Объемные объекты</span></a>
                    <a href="#" class="sub"><svg><use href="#i-desk"/></svg><span>Рабочий стол</span></a>
                    <a href="#" class="sub"><svg><use href="#i-disk"/></svg><span>Локальный диск</span></a>
                </nav>
                <div class="scroll">
                    <svg class="flip"><use href="#i-chev"/></svg>
                    <div class="thumb"></div>
                </div>
                <ul class="files">
                    <li><svg><use href="#f-antispy"/></svg>AntiSpy</li>
                    <li><svg><use href="#f-props"/></svg>Свойства</li>
                    <li><svg><use href="#f-oem"/></svg>OEM Info<br>Updater 9.7.exe</li>
                    <li><svg><use href="#f-ini"/></svg>OEM Info<br>Updater.ini</li>
                    <li class="selected"><svg><use href="#f-cfg"/></svg>OldNewExplorer<br>Cfg</li>
                    <li><svg><use href="#f-cmd"/></svg>OldNewExplorer<br>Cfg64_OFF.cmd</li>
                    <li><svg><use href="#f-reg"/></svg>On Copilot.reg</li>
                    <li><svg><use href="#f-txt"/></svg>ReadMe.txt</li>

                    <li><svg><use href="#f-super"/></svg>superUser64.exe</li>
                    <li><svg><use href="#f-reg"/></svg>Вкл<br>SmartScreen.reg</li>
                    <li><svg><use href="#f-reg"/></svg>Вкл Spotlight.reg</li>
                    <li><svg><use href="#f-reg"/></svg>Вкл UAC.reg</li>
                    <li><svg><use href="#f-reg"/></svg>Вкл Автом<br>обновление.reg</li>
                    <li><svg><use href="#f-reg"/></svg>Вкл<br>Гибернация.reg</li>
                    <li><svg><use href="#f-reg"/></svg>Вкл Защитник<br>Windows.reg</li>
                    <li><svg><use href="#f-reg"/></svg>Вкл Микр и<br>Камеру.reg</li>

                    <li><svg><use href="#f-reg"/></svg>Вкл Новости и<br>интересы.reg</li>
                    <li><svg><use href="#f-reg"/></svg>Вкл почта.reg</li>
                    <li><svg><use href="#f-reg"/></svg>Вкл стандартн<br>вид окон.reg</li>
                    <li><svg><use href="#f-reg"/></svg>Вкл<br>Телеметрия.reg</li>
                    <li><svg><use href="#f-cmd"/></svg>Включить<br>Windows<br>Defender.bat</li>
                    <li><svg><use href="#f-reg"/></svg>Меню_Пуск_Win<br>10.reg</li>
                    <li><svg><use href="#f-param"/></svg>Параметры</li>
                    <li><svg><use href="#f-reg"/></svg>Показ 7 папок<br>пользователя.re<br>g</li>

                    <li><svg><use href="#f-txt"/></svg></li>
                    <li><svg><use href="#f-reg"/></svg>Сброс иконок.reg</li>
                </ul>
                <div class="scroll">
                    <svg class="flip"><use href="#i-chev"/></svg>
                    <div class="thumb"></div>
                </div>
            </div>
        </section>

        <!-- Windows Security -->
        <section class="window win-security">
            <header class="titlebar">
                <h1>Безопасность Windows</h1>
                <div class="caption">
                    <button aria-label="Свернуть"><svg><use href="#i-min"/></svg></button>
                    <button aria-label="Развернуть"><svg><use href="#i-max"/></svg></button>
                    <button aria-label="Закрыть"><svg><use href="#i-close"/></svg></button>
                </div>
            </header>
            <div class="security">
                <nav class="rail">
                    <button class="back" aria-label="Назад"><svg><use href="#o-back"/></svg></button>
                    <button class="menu" aria-label="Меню"><svg><use href="#o-menu"/></svg></button>
                    <div class="rail-list">
                        <a href="#" class="active" aria-label="Главная"><svg><use href="#o-home"/></svg></a>
                        <a href="#" aria-label="Вирусы"><svg><use href="#o-shield"/></svg></a>
                        <a href="#" aria-label="Учетные записи"><svg><use href="#o-user"/></svg></a>
                        <a href="#" aria-label="Сеть"><svg><use href="#o-radio"/></svg></a>
                        <a href="#" aria-label="Приложения"><svg><use href="#o-window"/></svg></a>
                        <a href="#" aria-label="Устройство"><svg><use href="#o-laptop"/></svg></a>
                        <a href="#" aria-label="Производительность"><svg><use href="#o-heart"/></svg></a>
                        <a href="#" aria-label="Семья"><svg><use href="#o-family"/></svg></a>
                    </div>
                    <a href="#" class="options" aria-label="Параметры"><svg><use href="#o-gear"/></svg></a>
                </nav>
                <div class="overview">
                    <h2>Краткий обзор безопасности</h2>
                    <p class="lead">Просмотрите сведения о состоянии безопасности и<br>работоспособности устройства и выполните все необходимые<br>действия.</p>
                    <div class="cards">
                        <article><div class="mark"><svg><use href="#o-shield"/></svg><svg class="ok"><use href="#o-ok"/></svg></div><h3>Защита от вирусов и угроз</h3><p>Никаких действий не требуется.</p></article>
                        <article class="corner-br"><div class="mark"><svg><use href="#o-user"/></svg><svg class="ok"><use href="#o-ok"/></svg></div><h3>Защита учетных записей</h3><p>Никаких действий не требуется.</p></article>
                        <article class="corner-bl"><div class="mark"><svg><use href="#o-radio"/></svg><svg class="ok"><use href="#o-ok"/></svg></div><h3>Брандмауэр и<br>безопасность сети</h3><p>Никаких действий не требуется.</p></article>
                        <article><div class="mark"><svg><use href="#o-window"/></svg><svg class="ok"><use href="#o-ok"/></svg></div></article>
                        <article class="corner-tr"><div class="mark"><svg><use href="#o-laptop"/></svg><svg class="ok"><use href="#o-ok"/></svg></div></article>
                        <article class="corner-tl"><div class="mark"><svg><use href="#o-heart"/></svg></div></article>
                    </div>
                </div>
            </div>
        </section>

        <!-- OldNewExplorer configuration dialog -->
        <section class="window win-config">
            <header class="titlebar">
                <h1>OldNewExplorer configuration</h1>
                <div class="caption"><button aria-label="Close window"><svg><use href="#i-close"/></svg></button></div>
            </header>
            <form class="config">
                <fieldset class="shell">
                    <legend>Shell extension</legend>
                    <span>Installed</span>
                    <button type="button" disabled><svg><use href="#f-shield"/></svg>Install</button>
                    <button type="button" class="primary"><svg><use href="#f-shield"/></svg>Uninstall</button>
                </fieldset>
                <fieldset>
                    <legend>Behavior</legend>
                    <label><input type="checkbox">Use classical drive grouping in This PC</label>
                    <label><input type="checkbox">Use libraries; hide folders from This PC</label>
                </fieldset>
                <fieldset class="look">
                    <legend>Appearance</legend>
                    <label><input type="checkbox">Use command bar instead of Ribbon</label>
                    <label class="inner"><input type="checkbox">Hide caption text in File Explorer windows</label>
                    <label class="inner"><input type="checkbox">Hide caption icon in File Explorer windows</label>
                    <label class="inner"><input type="checkbox">Hide Up (go to parent folder) button</label>
                    <label class="inner"><input type="checkbox">Enable glass on navigation bar</label>
                    <label class="inner"><input type="checkbox">Use alternate navigation buttons style</label>
                    <label><input type="checkbox">Show details pane on the bottom</label>
                    <div class="choice">
                        <label for="look">Appearance style:</label>
                        <div class="pick"><select id="look"><option>Default style (Windows 7 style / skin style)</option></select><svg><use href="#i-chev"/></svg></div>
                    </div>
                    <div class="choice">
                        <label for="statusbar">Status bar style:</label>
                        <div class="pick"><select id="statusbar"><option>Default style (white)</option></select><svg><use href="#i-chev"/></svg></div>
                    </div>
                    <label><input type="checkbox" checked>Show status bar</label>
                </fieldset>
            </form>
            <footer>
                <span>OldNewExplorer 1.1.9</span>
                <a href="#">donate</a>
                <button type="button">Close</button>
            </footer>
        </section>

        <!-- Start menu -->
        <section class="start">
            <nav class="start-rail">
                <button aria-label="Меню"><svg><use href="#o-menu"/></svg></button>
                <button class="first" aria-label="Пользователь">
                    <svg class="avatar" viewBox="0 0 20 20"><circle cx="10" cy="10" r="10" fill="#e9eef2"/><path d="M4 18Q3 3 10 1q7 2 6 17-3 2-6 2t-6-2z" fill="#0b0b0b"/><ellipse cx="10" cy="10" rx="3.6" ry="5.5" fill="#d9d9d9"/><path d="M7.500 9h2M11 9h2M8 12q2 1.500 4 0M10 13v2" stroke="#111"/></svg>
                </button>
                <button aria-label="Документы"><svg><use href="#o-page"/></svg></button>
                <button aria-label="Изображения"><svg><use href="#o-image"/></svg></button>
                <button aria-label="Параметры"><svg><use href="#o-gear"/></svg></button>
                <button aria-label="Выключение"><svg><use href="#o-power"/></svg></button>
            </nav>
            <div class="apps-list">
                <h3>#</h3>
                <a href="#"><svg><use href="#a-folder"/></svg>8GadgetPack<svg class="more"><use href="#i-chev"/></svg></a>
                <h3>G</h3>
                <a href="#"><svg><use href="#a-chrome"/></svg>Google Chrome</a>
                <h3>M</h3>
                <a href="#"><svg><use href="#a-edge"/></svg>Microsoft Edge</a>
                <a href="#"><svg><use href="#a-cards"/></svg>Microsoft Solitaire Collection</a>
                <a href="#"><svg><use href="#a-store"/></svg><span>Microsoft Store<small>Система</small></span></a>
                <h3>N</h3>
                <a href="#"><svg><use href="#a-nvidia"/></svg>NVIDIA Control Panel</a>
                <h3>O</h3>
                <a href="#"><svg class="rust"><use href="#a-office"/></svg>Office</a>
                <a href="#"><svg><use href="#a-odfolder"/></svg>OneDrive</a>
                <a href="#"><svg><use href="#a-note"/></svg>OneNote</a>
            </div>
            <div class="tiles">
                <h2>Производительность</h2>
                <div class="tile-grid">
                    <a href="#" class="orange"><svg><use href="#a-office"/></svg><span>Office</span></a>
                    <a href="#" class="group" aria-label="Группа"><svg><use href="#i-cloud"/></svg><svg><use href="#a-note"/></svg></a>
                    <a href="#"><svg><use href="#a-mail"/></svg><span>Почта</span></a>
                    <a href="#"><svg><use href="#a-edge"/></svg><span>Microsoft Edge</span></a>
                    <a href="#"><svg><use href="#a-photo"/></svg><span>Фотографии</span></a>
                    <a href="#"><svg><use href="#a-store"/></svg><span>Microsoft Store</span></a>
                    <a href="#"><svg class="wide"><use href="#a-chrome"/></svg><span>Google Chrome</span></a>
                    <a href="#"><svg class="tall"><use href="#a-paint"/></svg><span>Paint 3D</span></a>
                    <a href="#" class="blue"><svg><use href="#a-skype"/></svg><span>Skype</span></a>
                    <a href="#" class="solitaire">
                        <svg viewBox="0 0 86 60">
                            <g transform="rotate(-13 20 34)"><rect x="5" y="8" width="32" height="48" rx="2" fill="#fff"/><path d="M17 14h14l3 12-6 24-8-6-4-16z" fill="#c98a3a"/><path d="M20 16h8v8h-8z" fill="#ecc99a"/><path d="M18 28l12 6M18 36l10 5" stroke="#8a2222" stroke-width="2"/><text x="7" y="18" class="card red">J</text></g>
                            <rect x="22" y="2" width="36" height="48" rx="2" fill="#fff"/><path d="M36 6h14v36H34l-4-16z" fill="#53305f"/><path d="M38 8h9v9h-9z" fill="#e3bf8e"/><path d="M33 22l12 6M33 32l12 5" stroke="#c33c4e" stroke-width="3"/><text x="24" y="10" class="card">Q</text>
                            <g transform="rotate(14 60 32)"><rect x="42" y="4" width="36" height="52" rx="2" fill="#fff"/><path d="M50 9h20l2 10-4 10 5 10-2 12H50l-3-12 4-9-4-9z" fill="#b5632c"/><path d="M56 10h9v9h-9zM56 41h9v8h-9z" fill="#e3bf8e"/><path d="M52 26l16 8M52 34l16-8" stroke="#7c1d1d" stroke-width="3"/><path d="M51 21h18M51 39h18" stroke="#e9b64a" stroke-width="2" stroke-dasharray="3 2"/><text x="44" y="13" class="card red">K</text></g>
                        </svg>
                        <span>Microsoft<br>Solitaire Collection</span>
                    </a>
                    <a href="#"><svg><use href="#a-xbox"/></svg><span>Xbox</span></a>
                    <a href="#"><svg><use href="#a-phone"/></svg><span>Ваш телефон</span></a>
                </div>
            </div>
        </section>

        <!-- Page curl -->
        <svg class="curl" viewBox="0 0 46 46"><path d="M0 0h46v46Q30 40 26 34 14 38 8 40 14 14 0 0z" fill="#8fa7da"/><path d="M0 0h16l30 30v16Q26 34 0 0z" fill="#b3c4ea"/><path d="M0 0q12 16 8 40 8-2 18-6Q10 20 0 0z" fill="#e9edf5"/><text x="19" y="12" transform="rotate(42 19 12)">DG</text></svg>
    </main>

    <!-- Taskbar -->
    <footer class="taskbar">
        <button class="launch" aria-label="Пуск"><svg><use href="#t-winflag"/></svg></button>
        <button aria-label="Поиск"><svg><use href="#o-search"/></svg></button>
        <button aria-label="Edge"><svg class="app"><use href="#a-edge"/></svg></button>
        <button class="open" aria-label="Проводник"><svg class="app"><use href="#a-explorer"/></svg></button>
        <button aria-label="Store"><svg class="app"><use href="#a-store"/></svg></button>
        <button aria-label="Почта"><svg class="app"><use href="#a-mail"/></svg></button>
        <button class="open" aria-label="Безопасность"><svg><use href="#a-wshield"/></svg></button>
        <button class="open" aria-label="Фотографии"><svg class="app"><use href="#a-photo"/></svg></button>
        <button class="open" aria-label="OldNewExplorer"><svg><use href="#f-shieldfolder"/></svg></button>
        <div class="tray">
            <svg class="flip"><use href="#i-chev"/></svg>
            <svg><use href="#o-net"/></svg>
            <svg><use href="#o-sound"/></svg>
            <span>РУС</span>
            <time>17:23<br>14.12.2023</time>
            <svg><use href="#o-note"/></svg>
        </div>
    </footer>
</body>
</html>
```

FILE: styles.css
```css
* {
    box-sizing: border-box;
}
body {
    margin: 0;
    height: 100vh;
    display: flex;
    flex-direction: column;
    overflow: hidden;
    font-family: "Open Sans", "Noto Sans", sans-serif;
    font-size: 12px;
    line-height: 15px;
    color: #000;
}
h1, h2, h3, p, ul {
    margin: 0;
    padding: 0;
    font-weight: normal;
}
h1, h3 {
    font-size: 12px;
}
ul {
    list-style: none;
}
a {
    color: inherit;
    text-decoration: none;
}
button {
    font: inherit;
    color: inherit;
    padding: 0;
    border: 0;
    background: none;
}
svg {
    width: 16px;
    height: 16px;
    flex: none;
    display: block;
}
.sprite {
    position: absolute;
    width: 0;
    height: 0;
}
.dvd-label {
    font: 10px "Open Sans", sans-serif;
    fill: #fff;
    text-anchor: middle;
}
.flip {
    transform: scaleY(-1);
}

/* Desktop */
.desktop {
    flex: 1;
    position: relative;
    overflow: hidden;
    background:
        linear-gradient(to bottom, rgba(0, 60, 150, 0.3), rgba(0, 60, 150, 0) 8%),
        linear-gradient(100deg, #00a8f8 0%, #00aaf6 36%, #0094ea 50%, #0068d4 68%, #0448c0 82%, #033eb2 100%);
}
.shortcuts {
    width: 76px;
    padding-top: 7px;
}
.shortcuts li {
    position: relative;
    height: 101px;
    display: flex;
    flex-direction: column;
    align-items: center;
    text-align: center;
    color: #fff;
    text-shadow: 1px 1px 2px #000, 0 0 3px #000;
}
.shortcuts .big {
    width: 48px;
    height: 48px;
    margin-bottom: 3px;
}
.shortcuts .faint {
    color: #3fb8fb;
}
.shortcuts .link {
    position: absolute;
    left: 14px;
    top: 36px;
    width: 13px;
    height: 13px;
}

/* Windows */
.window {
    position: absolute;
    display: flex;
    flex-direction: column;
    overflow: hidden;
    background: #fff;
    box-shadow: 0 0 0 1px rgba(60, 80, 100, 0.5), 0 4px 14px rgba(0, 0, 0, 0.4);
}
.win-pc {
    left: 75px;
    top: 10px;
    width: 686px;
    height: 511px;
}
.win-fix {
    left: 774px;
    right: 21px;
    top: 11px;
    height: 653px;
}
.win-security {
    left: 1096px;
    right: 14px;
    top: 523px;
    height: 500px;
}
.win-config {
    left: 668px;
    top: 544px;
    width: 410px;
    height: 485px;
}
.titlebar {
    height: 30px;
    flex: none;
    display: flex;
    align-items: center;
    color: #999;
}
.quick {
    display: flex;
    align-items: center;
    gap: 6px;
    padding: 0 7px 0 8px;
}
.quick i {
    width: 1px;
    height: 12px;
    background: #999;
    margin-right: 3px;
}
.quick .tiny {
    width: 8px;
    height: 8px;
}
.win-fix .quick, .win-fix .tabs {
    width: 268px;
}
.caption {
    display: flex;
    align-self: stretch;
    margin-left: auto;
}
.caption button {
    width: 46px;
    display: flex;
    align-items: center;
    justify-content: center;
    color: #888;
}
.caption svg {
    width: 10px;
    height: 10px;
}
.context {
    align-self: stretch;
    display: flex;
    gap: 2px;
    margin: 3px 13px 0 0;
}
.context span {
    display: flex;
    align-items: center;
    justify-content: center;
    color: #444;
}
.context .links {
    background: #fdceb6;
}
.context .apps {
    background: #eacbfb;
}
.links {
    width: 185px;
}
.apps {
    width: 215px;
}

.ribbon {
    height: 24px;
    flex: none;
    display: flex;
    align-items: center;
    border-bottom: 1px solid #dadbdc;
    color: #333;
}
.tabs {
    display: flex;
    align-items: center;
    align-self: stretch;
}
.tabs a {
    padding: 0 13px;
}
.win-fix .tabs a {
    padding: 0 12px;
}
.tabs .file {
    width: 56px;
    align-self: stretch;
    display: flex;
    align-items: center;
    justify-content: center;
    background: #0063b1;
    color: #fff;
}
.tools {
    height: 18px;
    margin-right: 2px;
    text-align: center;
    border: solid #ddd;
    border-width: 0 1px;
    white-space: nowrap;
}
.ribbon .expand {
    width: 12px;
    height: 12px;
    margin: 0 8px 0 auto;
    color: #888;
}
.help {
    width: 16px;
    height: 16px;
    margin-right: 3px;
    border-radius: 8px;
    background: #0f67b3;
    color: #fff;
    font-weight: bold;
    line-height: 16px;
}

.addressbar {
    height: 35px;
    flex: none;
    display: flex;
    align-items: center;
    padding: 0 12px 1px 4px;
}
.arrow {
    width: 30px;
    display: flex;
    justify-content: center;
    color: #666;
}
.arrow.recent {
    width: 16px;
}
.arrow.recent svg {
    width: 10px;
    height: 10px;
    --w: 2;
}
.arrow.parent {
    width: 26px;
}
.arrow.off {
    color: #ccc;
}
.path {
    flex: 1;
    height: 22px;
    display: flex;
    align-items: center;
    margin-right: 12px;
    padding-left: 2px;
    border: 1px solid #d9d9d9;
}
.path .sep {
    width: 12px;
    height: 12px;
    margin: 0 6px 0 3px;
}
.path .drop {
    width: 12px;
    height: 12px;
    margin: 0 2px 0 auto;
    color: #555;
    --w: 2;
}
.path button {
    width: 17px;
    height: 20px;
    padding-left: 2px;
    border-left: 1px solid #d9d9d9;
}
.path button svg {
    width: 12px;
    height: 12px;
}
.search {
    width: 202px;
    height: 22px;
    display: flex;
    align-items: center;
    padding: 0 8px;
    border: 1px solid #d9d9d9;
}
.search input {
    flex: 1;
    min-width: 0;
    padding: 0;
    border: 0;
    font: inherit;
}
.search input::placeholder {
    color: #777;
}
.search svg {
    width: 12px;
    height: 12px;
}

/* Explorer body */
.panes {
    flex: 1;
    min-height: 0;
    display: flex;
}
.tree {
    width: 140px;
    flex: none;
    overflow: hidden;
}
.win-fix .tree {
    padding-top: 16px;
}
.tree a {
    height: 24px;
    display: flex;
    align-items: center;
    gap: 4px;
    padding: 0 0 1px 32px;
    white-space: nowrap;
}
.tree .root {
    padding-left: 24px;
    margin: 8px 0;
}
.tree .root + .root {
    margin-top: 0;
}
.tree .root + .sub {
    margin-top: -8px;
}
.tree .quick-access {
    margin-top: 0;
}
.tree .current {
    background: #d9d9d9;
}
.tree span {
    overflow: hidden;
    flex: 1;
}
.tree .pin {
    width: 11px;
    height: 11px;
    margin: 0 3px 0 -4px;
}
.scroll {
    width: 16px;
    flex: none;
    display: flex;
    flex-direction: column;
    align-items: center;
    background: #f0f0f0;
    color: #444;
}
.scroll svg {
    width: 12px;
    height: 17px;
    --w: 2;
}
.thumb {
    flex: 1;
    width: 15px;
    background: #cdcdcd;
}
.thumb-pc {
    flex: none;
    height: 258px;
    margin: 10px 0 auto;
}
.content {
    flex: 1;
    margin-left: 1px;
    padding: 6px 7px 0 8px;
    border-left: 1px solid #f0f0f0;
}
.content h2 {
    height: 24px;
    display: flex;
    align-items: center;
    font-size: 15px;
    color: #1f3a7c;
}
.content h2 svg {
    width: 14px;
    height: 14px;
    margin: 0 3px 0 -2px;
    color: #777;
    --w: 1;
}
.content h2::after {
    content: "";
    flex: 1;
    height: 1px;
    margin-left: 8px;
    background: #e2e2e2;
}
.folders, .drives {
    display: grid;
    grid-template-columns: 254px 1fr;
    padding-left: 15px;
}
.folders {
    grid-auto-rows: 48px;
    gap: 8px 0;
    margin: 7px 0 4px;
}
.drives {
    grid-auto-rows: 51px;
    gap: 5px 0;
    margin-top: 1px;
}
.folders li, .drives li {
    display: flex;
    gap: 6px;
}
.folders li {
    padding-top: 6px;
}
.folders svg {
    width: 44px;
    height: 48px;
    margin-top: -6px;
}
.drives li {
    padding-top: 5px;
}
.drives svg {
    width: 44px;
    height: 50px;
    margin-top: -4px;
}
.drives .disc p {
    margin-top: 7px;
}
.bar {
    width: 189px;
    height: 13px;
    margin: 2px 0 1px;
    background: #e6e6e6;
    border: 1px solid #bcbcbc;
}
.bar div {
    height: 11px;
    background: #26a0da;
}
.bar.full div {
    background: #da2626;
}
.drives small {
    font-size: 12px;
    color: #6d6d6d;
}
.status {
    height: 23px;
    flex: none;
    display: flex;
    align-items: center;
    gap: 7px;
    padding: 0 7px 1px 14px;
    color: #2a3f66;
}
.status span {
    margin-right: auto;
}
.status .details {
    height: 14px;
}

.files {
    flex: 1;
    min-width: 0;
    overflow: hidden;
    display: grid;
    grid-template-columns: repeat(auto-fill, 105px);
    align-content: start;
    gap: 1px 11px;
    margin-left: 1px;
    padding: 6px 0 0 16px;
    border-left: 1px solid #f0f0f0;
}
.files li {
    min-height: 131px;
    padding: 2px 0 3px;
    text-align: center;
    white-space: nowrap;
}
.files svg {
    width: 96px;
    height: 96px;
    margin: 0 auto;
}
.files .selected {
    background: #d9d9d9;
}

/* Windows Security */
.win-security .titlebar {
    height: 32px;
    padding-left: 14px;
    color: #000;
}
.security {
    flex: 1;
    min-height: 0;
    display: flex;
    background: #fcfcfc;
}
.rail {
    width: 40px;
    flex: none;
    background: #f2f2f2;
}
.rail svg {
    margin: 0 auto;
}
.rail button, .rail a {
    width: 40px;
    height: 40px;
    display: flex;
    align-items: center;
}
.rail .back {
    color: #999;
}
.rail .menu {
    margin: 5px 0;
}
.rail-list {
    width: 38px;
    height: 290px;
    display: flex;
    flex-direction: column;
    margin: 23px 0 8px;
    border-right: 2px solid #7a7a7a;
}
.rail-list a {
    width: 37px;
    flex: none;
    margin: -10px 0 10px;
    padding-left: 2px;
}
.rail-list .active {
    height: 24px;
    width: 33px;
    margin: -7px 0 17px 4px;
    padding-left: 0;
    border-left: 2px solid #0a66b8;
}
.rail .options {
    margin-top: 21px;
}
.overview {
    flex: 1;
    overflow: hidden;
    padding: 47px 16px 0 39px;
    background: linear-gradient(#777, #777) no-repeat right 2px top 16px / 2px 258px;
}
.overview h2 {
    font-size: 22px;
    line-height: 36px;
    margin-bottom: 9px;
}
.lead {
    height: 101px;
    font-size: 12px;
    line-height: 18px;
    color: #666;
}
.cards {
    display: grid;
    grid-template-columns: repeat(3, 232px);
    grid-auto-rows: 188px;
    gap: 8px;
}
.cards article {
    padding: 20px 10px 0 20px;
    background: no-repeat #fff;
}
.cards h3 {
    font-size: 14px;
    line-height: 20px;
}
.cards p {
    line-height: 20px;
    color: #555;
    white-space: nowrap;
}
.mark {
    position: relative;
    width: 50px;
    height: 50px;
    margin-bottom: 21px;
    color: #1a6fb8;
    --w: 1;
}
.mark svg {
    width: 48px;
    height: 48px;
}
.mark .ok {
    position: absolute;
    right: 0;
    bottom: 0;
    width: 22px;
    height: 22px;
}
/* fading edges where the pointer meets four cards */
.cards .corner-br, .cards .corner-bl, .cards .corner-tr, .cards .corner-tl {
    background-image: linear-gradient(var(--side), #bbb, rgba(255, 255, 255, 0)), linear-gradient(var(--end), #bbb, rgba(255, 255, 255, 0));
    background-size: 60px 1px, 1px 60px;
}
.cards .corner-br {
    --side: to left;
    --end: to top;
    background-position: right bottom;
}
.cards .corner-bl {
    --side: to right;
    --end: to top;
    background-position: left bottom;
}
.cards .corner-tr {
    --side: to left;
    --end: to bottom;
    background-position: right top;
}
.cards .corner-tl {
    --side: to right;
    --end: to bottom;
    background-position: left top;
}

/* Configuration dialog */
.win-config .titlebar {
    height: 25px;
    padding-left: 3px;
}
.win-config .caption button {
    width: 30px;
}
.config {
    flex: 1;
    padding: 8px 8px 0;
}
fieldset {
    margin: 0 0 7px;
    padding: 6px 15px 5px;
    border: 1px solid #dcdcdc;
    min-width: 0;
}
legend {
    margin-left: -8px;
    padding: 0 3px;
}
.shell {
    display: flex;
    align-items: center;
    gap: 9px;
    padding: 2px 7px 7px 15px;
}
.shell span {
    margin-right: auto;
}
.shell button {
    width: 88px;
    height: 23px;
    display: flex;
    align-items: center;
    justify-content: center;
    gap: 2px;
    border: 1px solid #bfbfbf;
    background: #ccc;
    color: #838383;
}
.shell button:disabled svg {
    opacity: 0.6;
}
.shell .primary {
    border: 2px solid #0067b8;
    background: #e1e1e1;
    color: #000;
}
.config label {
    height: 23px;
    display: flex;
    align-items: center;
    white-space: nowrap;
}
.config .inner {
    padding-left: 17px;
}
.config input {
    appearance: none;
    width: 13px;
    height: 13px;
    margin: 0 3px 0 0;
    border: 1px solid #333;
    background: #fff;
}
.config input:checked::after {
    content: "";
    display: block;
    width: 8px;
    height: 4px;
    margin: 2px 1px;
    border: solid #222;
    border-width: 0 0 1px 1px;
    transform: rotate(-45deg);
}
.look {
    padding: 4px 15px;
    margin: 0;
}
.choice {
    display: flex;
    justify-content: space-between;
    margin: 7px 1px 5px 0;
}
.pick {
    position: relative;
    width: 262px;
}
.pick select {
    appearance: none;
    width: 100%;
    height: 23px;
    padding: 0 3px;
    border: 1px solid #adadad;
    border-radius: 0;
    background: #e1e1e1;
    font: inherit;
    color: #000;
}
.pick svg {
    position: absolute;
    right: 3px;
    top: 6px;
    width: 12px;
    height: 12px;
    color: #333;
}
.win-config footer {
    height: 35px;
    flex: none;
    display: flex;
    align-items: center;
    padding: 0 5px 0 3px;
    border-top: 1px solid #a0a0a0;
    background: #f0f0f0;
    color: #6d6d6d;
}
.win-config footer a {
    margin-left: 8px;
    color: #0066cc;
    text-decoration: underline;
}
.win-config footer button {
    width: 73px;
    height: 24px;
    margin-left: auto;
    border: 1px solid #adadad;
    background: #e1e1e1;
    color: #000;
}

/* Start menu */
.start {
    position: absolute;
    left: 0;
    bottom: 0;
    width: 648px;
    height: 490px;
    display: flex;
    overflow: hidden;
    background: #0b65a4;
    color: #fff;
}
.start-rail {
    width: 50px;
    display: flex;
    flex-direction: column;
    padding-top: 4px;
}
.start-rail button {
    height: 48px;
    display: flex;
    align-items: center;
    justify-content: center;
}
.start-rail .first {
    margin-top: auto;
}
.start-rail .avatar {
    width: 20px;
    height: 20px;
}
.apps-list {
    width: 258px;
    padding: 9px 0 0 14px;
    color: #e8f2f9;
}
.apps-list h3 {
    width: 24px;
    height: 36px;
    line-height: 37px;
    text-align: center;
}
.apps-list a {
    height: 36px;
    display: flex;
    align-items: center;
    gap: 8px;
    padding-bottom: 3px;
}
.apps-list svg {
    width: 24px;
    height: 24px;
}
.apps-list .rust {
    color: #d1441c;
}
.apps-list .more {
    width: 12px;
    height: 12px;
    margin: 0 8px 0 auto;
}
.apps-list small {
    display: block;
    font-size: 12px;
    color: #8ebbdb;
}
.tiles {
    padding: 21px 0 0 16px;
}
.tiles h2 {
    font-size: 12px;
    margin-bottom: 13px;
}
.tile-grid {
    display: grid;
    grid-template-columns: repeat(3, 100px);
    grid-auto-rows: 100px;
    gap: 4px;
}
.tile-grid a {
    position: relative;
    display: flex;
    align-items: center;
    justify-content: center;
    background: #2474ad;
    white-space: nowrap;
}
.tile-grid span {
    position: absolute;
    left: 8px;
    bottom: 5px;
}
.tile-grid svg {
    width: 33px;
    height: 33px;
}
.tile-grid .wide {
    width: 37px;
    height: 37px;
}
.tile-grid .tall {
    width: 36px;
    height: 46px;
}
.tile-grid .orange {
    background: #d83b01;
}
.tile-grid .blue {
    background: #0078d7;
}
.tile-grid .group {
    align-items: flex-start;
    justify-content: flex-start;
    gap: 14px;
    padding: 8px;
}
.tile-grid .group svg {
    width: 18px;
    height: 18px;
}
.tile-grid .solitaire {
    background: radial-gradient(#2c72c2, #183c86);
    align-items: flex-start;
    padding-top: 8px;
}
.tile-grid .solitaire svg {
    width: 86px;
    height: 60px;
}
.tile-grid .solitaire span {
    left: 0;
    right: 0;
    font-size: 10px;
    line-height: 11px;
    text-align: center;
}
.card {
    font: bold 8px "Liberation Sans", sans-serif;
}
.red {
    fill: #c4161c;
}

.curl {
    position: absolute;
    right: 0;
    top: 0;
    width: 44px;
    height: 44px;
}
.curl text {
    font: bold 14px "Liberation Sans", sans-serif;
    fill: #1c63d8;
}

/* Taskbar */
.taskbar {
    height: 40px;
    flex: none;
    display: flex;
    color: #fff;
    background: linear-gradient(to right, #2b9ccb 0%, #2c9acb 35%, #2e8ac8 55%, #3470bb 75%, #3a5cb0 100%);
}
.taskbar button {
    width: 49px;
    display: flex;
    align-items: center;
    justify-content: center;
}
.taskbar button svg {
    width: 21px;
    height: 21px;
}
.taskbar button .app {
    width: 24px;
    height: 24px;
}
.taskbar .launch {
    width: 48px;
    background: #3fa6d1;
}
.taskbar .open {
    box-shadow: inset 0 -2px #8cc6ea;
    margin: 0 5px;
    width: 39px;
}
.tray {
    display: flex;
    align-items: center;
    gap: 8px;
    margin-left: auto;
    padding-right: 25px;
}
.tray .flip {
    width: 18px;
}
.tray time {
    margin: 0 8px 0 1px;
    text-align: center;
    line-height: 17px;
}
```
